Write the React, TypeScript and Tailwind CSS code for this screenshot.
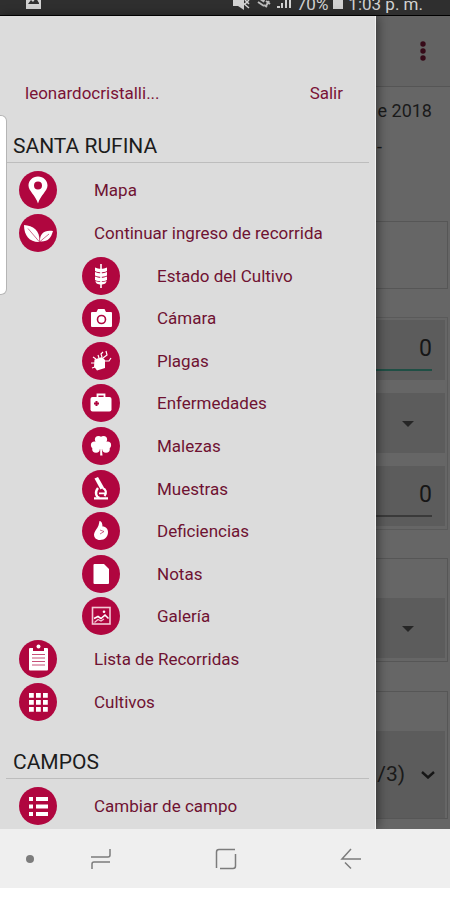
import React from "react";

type Item = { label: string; icon: React.ReactNode; sub?: boolean };

const BG = "#b0063f";

const icons = {
  pin: (
    <path
      fillRule="evenodd"
      d="M19 5.500C13.500 5.500 9.500 9.500 9.500 14.500C9.500 20 16.500 24 19 32.500C21.500 24 28.500 20 28.500 14.500C28.500 9.500 24.500 5.500 19 5.500ZM19 10.500a4 4 0 1 1 0 8a4 4 0 1 1 0-8Z"
    />
  ),
  leaves: (
    <>
      <path d="M5 11C14 11.500 21 16 20.500 28C11 28.500 5 22 5 11Z" />
      <path d="M34 17C26 15.500 20.500 19 21 27.500C29 28 32 24 34 17Z" />
      <path d="M9 14.500L20.500 28M30 20L21 27.500" stroke={BG} strokeWidth="0.600" fill="none" />
    </>
  ),
  wheat: (
    <>
      <path d="M18.200 7h1.600v24h-1.600z" />
      <path d="M13 10.500c2 1 4 1.300 6 1.300s4-.3 6-1.300v3.400c-2 1-4 1.300-6 1.300s-4-.3-6-1.300zM13 15c2 1 4 1.300 6 1.300s4-.3 6-1.300v3.400c-2 1-4 1.300-6 1.300s-4-.3-6-1.300zM13 19.500c2 1 4 1.300 6 1.300s4-.3 6-1.300v3.400c-2 1-4 1.300-6 1.300s-4-.3-6-1.300zM13.500 24c2 .8 3.500 1 5.500 1s3.500-.2 5.500-1c0 2.500-2.500 3.500-5.500 3.500s-5.500-1-5.500-3.500z" />
    </>
  ),
  camera: (
    <>
      <path d="M10 13h4.500l1.500-3h6.500l1.500 3H29q1 0 1 1v13q0 1-1 1H10q-1 0-1-1V14q0-1 1-1z" />
      <circle cx="19.500" cy="20.500" r="4" fill="#fff" stroke={BG} strokeWidth="1.600" />
    </>
  ),
  bug: (
    <>
      <path d="M12.500 17.500L20 15l3 3v8l-8 2.500-3-4z" />
      <path
        d="M14 17l-3-2M17 16l-1-3M20 15l-1-3 2-2M21 16l4-3-1-4M23 19h4l2-3M13 21l-4 0M13 25l-3 1"
        fill="none"
        stroke="#fff"
        strokeWidth="1.200"
      />
    </>
  ),
  kit: (
    <>
      <path d="M10.500 13h17q2 0 2 2v10.500q0 2-2 2h-17q-2 0-2-2V15q0-2 2-2z" />
      <path d="M15.500 13.500v-3h7v3" fill="none" stroke="#fff" strokeWidth="1.800" />
      <path d="M14.500 17v5M12 19.500h5" stroke={BG} strokeWidth="2" />
    </>
  ),
  clover: (
    <>
      <circle cx="16.500" cy="12.500" r="3.600" />
      <circle cx="21.500" cy="12.500" r="3.600" />
      <circle cx="12.500" cy="18" r="3.600" />
      <circle cx="14" cy="22" r="3.800" />
      <circle cx="25.500" cy="18" r="3.600" />
      <circle cx="24" cy="22" r="3.800" />
      <path d="M14 14h10l1 9-6-1-6 1zM18.200 22h1.600l.7 6.500h-2.300z" />
    </>
  ),
  microscope: (
    <>
      <path d="M12.500 8.500l3.500-1.500 6 10.500-3.500 2z" />
      <path d="M16 18C12.500 22 14 27 17.500 28" fill="none" stroke="#fff" strokeWidth="2.400" />
      <path d="M20.500 18c3.500 1 4.500 5 2 8" fill="none" stroke="#fff" strokeWidth="2.200" />
      <path d="M12 27.200h14v2.300H12zM17 22.500h6v1.800h-6z" />
    </>
  ),
  hand: (
    <>
      <path d="M17.500 9C19 8.500 20.500 11 20.500 14.500C24 14.500 26 17 26 20C26 24.500 23 28 18 28C14 28 12 25.500 12 22.500C12 20 14.500 17.500 15.500 15.500C17 13 17 11 17.500 9Z" />
      <path d="M18 18l4 1.500-4 2.500" fill="none" stroke={BG} strokeWidth="0.600" />
    </>
  ),
  note: <path d="M12.500 9h9.500l5 5V28q0 1-1 1H12.500q-1 0-1-1V10q0-1 1-1z" />,
  gallery: (
    <>
      <rect x="10.500" y="10.500" width="17.500" height="16.500" fill="none" stroke="#f3c9d6" strokeWidth="1.600" />
      <path d="M12 21.500l4-2 3 2 4-3.500 3.500 3.500" fill="none" stroke="#fff" strokeWidth="1.600" />
      <path d="M12.500 25.500l3.500-3 3 1.500 3-2" fill="none" stroke="#f3c9d6" strokeWidth="1.200" />
      <circle cx="22" cy="14.800" r="1.300" />
    </>
  ),
  clipboard: (
    <>
      <path d="M11 8h17q1 0 1 1v20.500q0 1-1 1H11q-1 0-1-1V9q0-1 1-1z" />
      <path d="M14 11V8h3.500a2 2 0 0 1 4 0H25v3z" fill={BG} />
      <circle cx="19.500" cy="6.500" r="2" />
      <path d="M13 14.500h13M13 18h13M13 21.500h13M13 25h13" stroke={BG} strokeWidth="1" opacity="0.700" />
    </>
  ),
  grid: (
    <path d="M10 10h4.800v4.800H10zM17 10h4.800v4.800H17zM24 10h4.800v4.800H24zM10 17h4.800v4.800H10zM17 17h4.800v4.800H17zM24 17h4.800v4.800H24zM10 24h4.800v4.800H10zM17 24h4.800v4.800H17zM24 24h4.800v4.800H24z" />
  ),
  list: (
    <path d="M10 10h4v4h-4zM17 10h12v4H17zM10 17.500h4v4h-4zM17 17.500h12v4H17zM10 25h4v4h-4zM17 25h12v4H17z" />
  ),
};

const items: Item[] = [
  { label: "Mapa", icon: icons.pin },
  { label: "Continuar ingreso de recorrida", icon: icons.leaves },
  { label: "Estado del Cultivo", icon: icons.wheat, sub: true },
  { label: "Cámara", icon: icons.camera, sub: true },
  { label: "Plagas", icon: icons.bug, sub: true },
  { label: "Enfermedades", icon: icons.kit, sub: true },
  { label: "Malezas", icon: icons.clover, sub: true },
  { label: "Muestras", icon: icons.microscope, sub: true },
  { label: "Deficiencias", icon: icons.hand, sub: true },
  { label: "Notas", icon: icons.note, sub: true },
  { label: "Galería", icon: icons.gallery, sub: true },
  { label: "Lista de Recorridas", icon: icons.clipboard },
  { label: "Cultivos", icon: icons.grid },
];

function MenuLink({ label, icon, sub }: Item) {
  return (
    <a href="#" className={`flex items-center gap-[37px] text-[17px] leading-5 text-[#6f1232] ${sub ? "pl-[82px]" : "pl-[19px]"}`}>
      <svg viewBox="0 0 38 38" className="size-[38px] shrink-0" fill="#fff" aria-hidden="true">
        <circle cx="19" cy="19" r="19" fill={BG} />
        {icon}
      </svg>
      <span className="whitespace-nowrap">{label}</span>
    </a>
  );
}

function SectionTitle({ children }: { children: React.ReactNode }) {
  return (
    <h2 className="mr-[6px] ml-[6px] border-b border-[#bdbdbd] pb-1 pl-[7px] text-[21px] leading-6 text-[#1c1c1c]">
      {children}
    </h2>
  );
}

function StatusBar() {
  return (
    <header className="flex h-4 items-end justify-between overflow-hidden border-b border-black bg-[#2f2f2f] pr-[27px] pb-[3px] pl-[25px] text-[17px] leading-4 text-[#d2d2d2]">
      <svg viewBox="0 0 17 14" className="mb-[2px] h-[14px] w-[17px]" aria-hidden="true">
        <path d="M1 0h15v13H1z" fill="#d2d2d2" />
        <path d="M3 8l3-4 2 2 3-4 3 5v1z" fill="#2f2f2f" />
      </svg>
      <div className="flex items-end gap-[5px]">
        <svg viewBox="0 0 64 16" className="h-4 w-[64px]" fill="#d2d2d2" aria-hidden="true">
          <path d="M5 4h5l6-5v15L10 10H5z" />
          <path d="M8 1l13 11M17 8l4-4M17 4l4 4" stroke="#d2d2d2" strokeWidth="1.500" />
          <path d="M31 2l4 3M37 2l-2 4M30 6l6 4M38 5l4 3M36 9l3 2M41 5l-3 5" stroke="#bdbdbd" strokeWidth="2" />
          <path d="M49 10h3v2h-3zM53 7h2v5h-2zM57 4h2v8h-2zM61 1h2v11h-2z" />
        </svg>
        <span>70%</span>
        <span className="mb-[3px] h-4 w-[10px] bg-[#d2d2d2]" />
        <span className="whitespace-nowrap">1:03 p. m.</span>
      </div>
    </header>
  );
}

function Drawer() {
  return (
    <nav className="relative z-10 flex w-[376px] shrink-0 flex-col border-r border-[#f2f2f2] bg-[#dcdcdc] shadow-[2px_0_10px_rgba(0,0,0,0.45)]">
      <div className="flex items-center justify-between pt-[67px] pr-[32px] pb-[31px] pl-[25px] text-[17px] leading-5 text-[#7a1236]">
        <span>leonardocristalli...</span>
        <button type="button">Salir</button>
      </div>
      <SectionTitle>SANTA RUFINA</SectionTitle>
      <div className="mt-[6px] grid h-[554px] auto-rows-fr">
        {items.map((i) => (
          <MenuLink key={i.label} {...i} />
        ))}
      </div>
      <div className="mt-[27px] mb-[8px]">
        <SectionTitle>CAMPOS</SectionTitle>
      </div>
      <MenuLink label="Cambiar de campo" icon={icons.list} />
      <div className="absolute top-[99px] left-0 h-[180px] w-[7px] rounded-r-md border border-l-0 border-[#b5b5b5] bg-white" />
    </nav>
  );
}

function Caret() {
  return (
    <svg viewBox="0 0 12 6" className="pointer-events-none absolute top-[28px] right-[31px] h-[6px] w-3" aria-hidden="true">
      <path d="M0 0h12L6 6z" fill="#262626" />
    </svg>
  );
}

function NumberField({ label, line }: { label: string; line: string }) {
  return (
    <div className="h-[60px] bg-[#5c5c5c] pr-[13px]">
      <input
        aria-label={label}
        defaultValue="0"
        className={`h-[51px] w-full border-b-2 bg-transparent pt-[8px] text-right text-[23px] text-[#161616] outline-none ${line}`}
      />
    </div>
  );
}

function SelectField({ label }: { label: string }) {
  return (
    <div className="relative h-[60px] bg-[#5c5c5c]">
      <select aria-label={label} className="h-full w-full appearance-none bg-transparent outline-none">
        <option></option>
      </select>
      <Caret />
    </div>
  );
}

function FormPage() {
  return (
    <main className="flex min-w-0 flex-1 flex-col overflow-hidden bg-[#666] text-[#1a1a1a]">
      <div className="flex h-[71px] items-center justify-end border-b border-[#555] bg-[#636363] pr-[23px]">
        <button type="button" aria-label="Opciones">
          <svg viewBox="0 0 8 24" className="h-6 w-2" fill="#360a18" aria-hidden="true">
            <circle cx="4" cy="5" r="2.700" />
            <circle cx="4" cy="12" r="2.700" />
            <circle cx="4" cy="19" r="2.700" />
          </svg>
        </button>
      </div>
      <p className="mt-3 flex justify-end pr-[18px] text-[18px] leading-6 whitespace-nowrap">e 2018</p>
      <p className="mt-3 pl-px text-[18px] leading-6">-</p>
      <section className="mt-[62px] mr-[2px] h-[68px] border-y border-r border-[#565656]" />
      <section className="mt-[28px] mr-[2px] flex flex-col gap-[13px] border-y border-r border-[#5a5a5a] pt-[2px] pr-[2px] pb-[3px]">
        <NumberField label="Cantidad" line="border-[#1f4f45]" />
        <SelectField label="Unidad" />
        <NumberField label="Total" line="border-[#3a3a3a]" />
      </section>
      <section className="mt-[28px] mr-[2px] border-y border-r border-[#565656] pt-[39px] pr-[2px] pb-[3px]">
        <SelectField label="Estado" />
      </section>
      <section className="mt-[29px] mr-[2px] border-y border-r border-[#565656] pt-[39px] pr-[2px]">
        <div className="relative h-[87px] bg-[#5c5c5c]">
          <select
            aria-label="Estadio"
            className="h-full w-full appearance-none bg-transparent pr-[40px] text-[21px] outline-none [text-align-last:right]"
          >
            <option>/3)</option>
          </select>
          <svg viewBox="0 0 14 8" className="pointer-events-none absolute top-[40px] right-[10px] h-2 w-[14px]" fill="none" aria-hidden="true">
            <path d="M1 1l6 5.500L13 1" stroke="#161616" strokeWidth="2.400" />
          </svg>
        </div>
      </section>
    </main>
  );
}

function SystemNav() {
  return (
    <footer className="relative z-20 flex h-[59px] items-center bg-[#efefef] pr-[88px] pl-[26px] text-[#7c7c7c]">
      <span className="size-2 rounded-full bg-current" />
      <div className="ml-[56px] flex flex-1 items-center justify-between">
        <button type="button" aria-label="Recientes">
          <svg viewBox="0 0 22 22" className="size-[22px]" fill="none" stroke="currentColor" strokeWidth="1.500" aria-hidden="true">
            <path d="M1 9h17q2 0 2-2V1M2 21v-5q0-2 2-2h16" />
          </svg>
        </button>
        <button type="button" aria-label="Inicio">
          <svg viewBox="0 0 22 22" className="size-[22px]" fill="none" stroke="currentColor" strokeWidth="1.500" aria-hidden="true">
            <path d="M1.500 20V4q0-2.500 2.500-2.500h16M20.500 6v12q0 2.500-2.500 2.500H5" />
          </svg>
        </button>
        <button type="button" aria-label="Atrás">
          <svg viewBox="0 0 22 22" className="size-[22px]" fill="none" stroke="currentColor" strokeWidth="1.500" aria-hidden="true">
            <path d="M11 1L2 11h19M5 14.500L11 20.500" />
          </svg>
        </button>
      </div>
    </footer>
  );
}

export default function App() {
  return (
    <div className="flex min-h-screen flex-col bg-white font-[Roboto,sans-serif]">
      <StatusBar />
      <div className="flex h-[813px]">
        <Drawer />
        <FormPage />
      </div>
      <SystemNav />
    </div>
  );
}
